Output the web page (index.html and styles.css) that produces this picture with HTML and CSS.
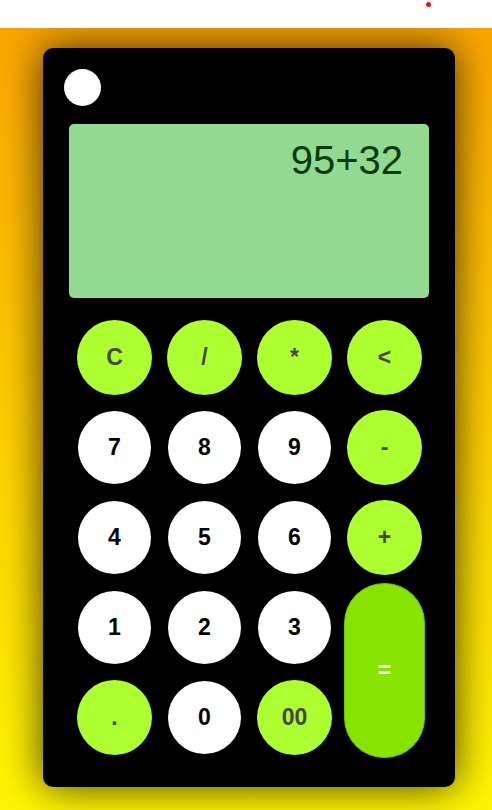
FILE: index.html
```html
<!DOCTYPE html>
<html>
<head>
<meta charset="utf-8">
<link rel="stylesheet" href="styles.css">
</head>
<body>
<div class="topbar"><span class="dot"></span></div>
<main class="stage">
  <div class="calc">
    <div class="power"></div>
    <div class="display">95+32</div>
    <div class="keys">
      <button class="key op">C</button>
      <button class="key op">/</button>
      <button class="key op">*</button>
      <button class="key op">&lt;</button>
      <button class="key num">7</button>
      <button class="key num">8</button>
      <button class="key num">9</button>
      <button class="key op">-</button>
      <button class="key num">4</button>
      <button class="key num">5</button>
      <button class="key num">6</button>
      <button class="key op">+</button>
      <button class="key num">1</button>
      <button class="key num">2</button>
      <button class="key num">3</button>
      <button class="key eq">=</button>
      <button class="key op">.</button>
      <button class="key num">0</button>
      <button class="key op">00</button>
    </div>
  </div>
</main>
</body>
</html>
```

FILE: styles.css
```css
* { box-sizing: border-box; }
html, body { margin: 0; padding: 0; }
body {
  width: 492px;
  height: 810px;
  overflow: hidden;
  font-family: "Liberation Sans", Arial, sans-serif;
  background: #fff;
}
.topbar {
  position: relative;
  height: 28px;
  background: #fff;
}
.dot {
  position: absolute;
  left: 426px;
  top: 2px;
  width: 5px;
  height: 5px;
  border-radius: 50%;
  background: #e8141c;
}
.stage {
  height: 782px;
  background: linear-gradient(to bottom, #fba500, #fff500);
  padding: 20px 0 0 43px;
}
.calc {
  width: 412px;
  height: 739px;
  background: #000;
  border-radius: 10px;
  box-shadow: 0 0 40px rgba(0, 0, 0, 0.75);
  padding: 21px 26px 0 26px;
}
.power {
  width: 37px;
  height: 37px;
  margin-left: -5px;
  border-radius: 50%;
  background: #fff;
}
.display {
  margin-top: 18px;
  height: 174px;
  background: #92da92;
  border-radius: 5px;
  padding: 14px 26px 0 0;
  text-align: right;
  font-size: 40px;
  color: #0c3a0c;
}
.keys {
  margin: 22px 0 0 8px;
  display: grid;
  grid-template-columns: repeat(4, 75px);
  grid-auto-rows: 75px;
  gap: 15px;
}
.key {
  border: none;
  padding: 0;
  margin: 0;
  border-radius: 50%;
  font-family: "Liberation Sans", Arial, sans-serif;
  font-weight: bold;
  font-size: 23px;
  display: flex;
  align-items: center;
  justify-content: center;
  width: 75px;
  height: 75px;
  place-self: center;
}
.op {
  background: #adff2f;
  color: #464646;
}
.num {
  background: #fff;
  color: #000;
  width: 73px;
  height: 73px;
}
.eq {
  grid-column: 4;
  grid-row: 4 / span 2;
  width: 81px;
  height: 175px;
  margin-top: -4px;
  border-radius: 40px;
  background: #87e400;
  border: 1px solid #6fc000;
  color: #fff;
}
```
